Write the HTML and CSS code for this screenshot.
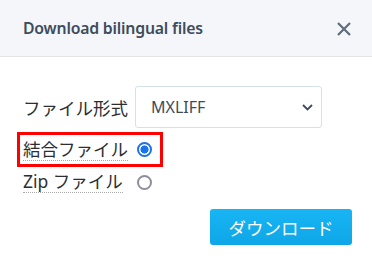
FILE: index.html
```html
<!DOCTYPE html>
<html lang="ja">
<head>
    <meta charset="UTF-8">
    <title>Download bilingual files</title>
    <link rel="stylesheet" href="styles.css">
</head>
<body>
    <div class="dialog">
        <div class="head flex">
            <h3>Download bilingual files</h3>
            <span class="close">
                <svg width="16" height="16" viewBox="0 0 16 16"><path d="M2 2L14 14M14 2L2 14" stroke="#5f6d7a" stroke-width="2.2" fill="none"/></svg>
            </span>
        </div>
        <div class="body">
            <div class="row flex">
                <label class="lbl">ファイル形式</label>
                <div class="select flex">
                    <span>MXLIFF</span>
                    <svg width="11" height="7" viewBox="0 0 11 7"><path d="M1 1L5.5 5.5L10 1" stroke="#3d4c5c" stroke-width="1.8" fill="none"/></svg>
                </div>
            </div>
            <div class="opt flex picked">
                <span class="txt"><span class="dot">結合ファイル</span></span>
                <span class="radio on"></span>
            </div>
            <div class="opt flex">
                <span class="txt"><span class="dot">Zip ファイル</span></span>
                <span class="radio"></span>
            </div>
            <div class="foot flex">
                <button class="btn">ダウンロード</button>
            </div>
        </div>
    </div>
</body>
</html>
```
FILE: styles.css
```css
*{margin:0px;padding:0px;box-sizing:border-box;font-family:"Noto Sans","Noto Sans CJK JP",sans-serif;}

body{background:#fff;color:#2b2f33;width:372px;height:264px;overflow:hidden;}

.flex{display:flex;align-items:center;}

.head{background:#f4f6f9;height:57px;border-bottom:1px solid #e1e5ea;padding:0 20px 0 23px;justify-content:space-between;}
.head h3{font-size:15.8px;font-weight:600;color:#3d4c5c;letter-spacing:-0.2px;}
.close{display:flex;width:16px;height:16px;margin-top:1px;}

.body{padding:29px 20px 0 17px;}

.row{height:42px;}
.lbl{font-size:17.5px;padding-left:6px;width:118px;white-space:nowrap;}
.select{width:187px;height:42px;border:1px solid #d3e1e8;border-radius:3px;padding:0 8px 0 15px;justify-content:space-between;color:#3d4c5c;font-size:16px;}

.opt{height:33px;padding-left:6px;width:146px;}
.opt.picked{margin-top:4px;height:35px;border:3px solid #f00;padding-left:3px;}
.opt + .opt{margin-top:0;height:30px;}
.txt{width:113px;}
.dot{font-size:17.5px;line-height:21px;border-bottom:1px dotted #aaa;white-space:nowrap;display:inline-block;}
.radio{width:15px;height:15px;border-radius:50%;border:2px solid #8e8e9e;margin-left:1px;}
.radio.on{border-color:#1a73e8;background:radial-gradient(circle,#1a73e8 0 3.8px,#fff 4.3px);}

.foot{justify-content:flex-end;margin-top:12px;}
.btn{width:142px;height:36px;border:none;border-radius:3px;background:linear-gradient(#18b5f5,#0ea6e6);color:#fff;font-size:17.5px;}
```
